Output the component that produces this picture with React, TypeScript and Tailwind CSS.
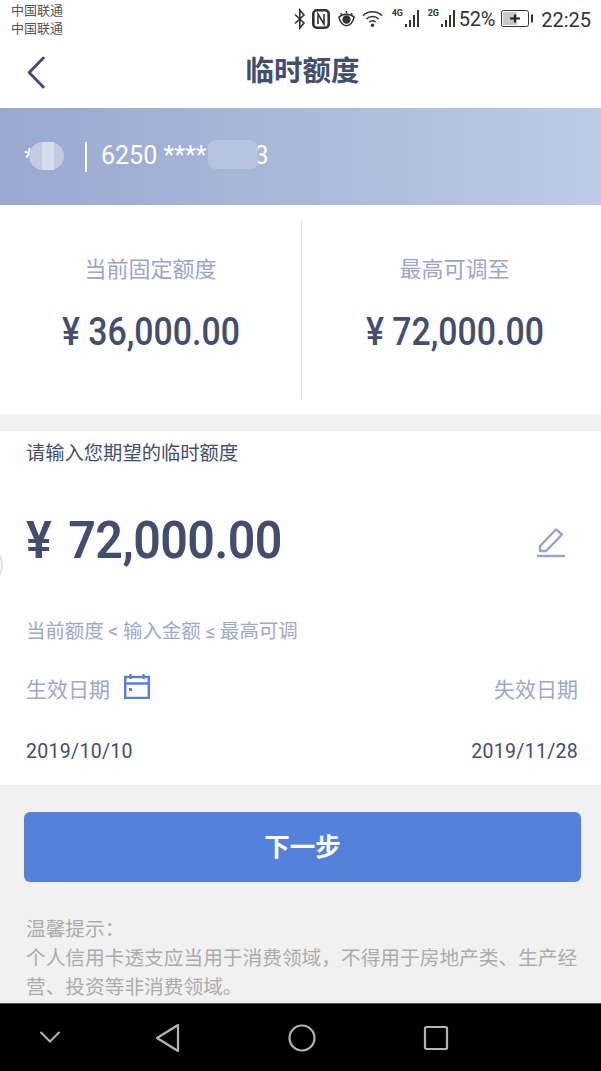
const cjk = "font-['Roboto','Noto_Sans_CJK_SC',sans-serif]";

function StatusBar() {
  return (
    <div className="h-[44px] flex justify-between pl-[11px] pr-[10px] bg-white">
      <div className="pt-[2px] text-[13px] leading-[18px] text-[#555]">
        <p>中国联通</p>
        <p>中国联通</p>
      </div>
      <div className="flex items-start pt-[7px] h-[30px] text-[#333]">
        <svg width="12" height="22" viewBox="0 0 12 22" className="mt-[1px]" fill="none" stroke="#333" strokeWidth="1.6">
          <path d="M1 6.5 L10 15 L5.8 20 V2 L10 7 L1 15.5" />
        </svg>
        <svg width="18" height="20" viewBox="0 0 18 20" className="ml-[6px] mt-[2px]" fill="none" stroke="#333" strokeWidth="2.6">
          <rect x="1.3" y="1.3" width="15.4" height="17.4" rx="3.5" />
          <path d="M6 15 V5 L12 15 V5" strokeWidth="1.6" />
        </svg>
        <svg width="19" height="20" viewBox="0 0 20 20" className="ml-[7px] mt-[2px]" fill="none" stroke="#333" strokeWidth="1.6">
          <path d="M2 8 C6 4 14 4 18 8 C17 14 13 17 10 17 C7 17 3 14 2 8 Z" />
          <circle cx="10" cy="10.5" r="3.6" fill="#333" />
          <path d="M4 4 L5.5 6 M10 1.5 V4 M16 4 L14.5 6" />
        </svg>
        <svg width="21" height="20" viewBox="0 0 22 20" className="ml-[6px] mt-[2px]" fill="none" stroke="#333" strokeWidth="1.5">
          <path d="M1 6.5 C6.5 1 15.5 1 21 6.5 M4.5 10 C8 6.5 14 6.5 17.5 10 M7.5 13.2 C9.5 11.5 12.5 11.5 14.5 13.2" />
          <circle cx="11" cy="16.5" r="1.8" fill="#333" stroke="none" />
        </svg>
        <Signal label="4G" className="ml-[9px]" />
        <Signal label="2G" className="ml-[9px]" />
        <span className="ml-[4px] text-[20px] leading-[24px] font-['Roboto',sans-serif] tracking-[-0.2px]">52%</span>
        <svg width="33" height="18" viewBox="0 0 33 18" className="ml-[6px] mt-[3px]" fill="none">
          <rect x="0.5" y="0.5" width="27" height="16" rx="2" stroke="#333" />
          <rect x="2" y="2" width="14" height="13" fill="#c8c8c8" />
          <path d="M9 8.5 H19 M14 4.5 V12.5" stroke="#222" strokeWidth="2.2" />
          <rect x="30" y="4.5" width="2" height="8" fill="#333" />
        </svg>
        <span className="ml-[7px] text-[20px] leading-[24px] mt-[1px] font-['Roboto',sans-serif]">22:25</span>
      </div>
    </div>
  );
}

function Signal({ label, className }: { label: string; className: string }) {
  return (
    <div className={`relative w-[27px] h-[20px] ${className}`}>
      <span className="absolute left-0 top-[1px] text-[9px] leading-[10px] font-bold font-['Roboto',sans-serif]">{label}</span>
      <div className="absolute right-0 bottom-0 flex items-end gap-[2px]">
        <i className="block w-[2px] h-[3px] bg-[#333]" />
        <i className="block w-[2px] h-[7px] bg-[#333]" />
        <i className="block w-[2px] h-[12px] bg-[#333]" />
        <i className="block w-[2px] h-[17px] bg-[#333]" />
      </div>
    </div>
  );
}

function Stat({ label, value, className }: { label: string; value: string; className: string }) {
  return (
    <div className={`flex flex-col items-center pt-[50px] ${className}`}>
      <p className="text-[22px] leading-[30px] text-[#9aa5c9]">{label}</p>
      <p className="mt-[25px] text-[38px] leading-[44px] font-medium text-[#434e6e] scale-x-[0.89]">{value}</p>
    </div>
  );
}

export default function App() {
  return (
    <div className={`w-[601px] h-[1071px] overflow-hidden flex flex-col bg-[#f1f1f1] ${cjk}`}>
      <StatusBar />

      <div className="h-[64px] relative flex items-center justify-center bg-white">
        <svg width="20" height="33" viewBox="0 0 20 34" className="absolute left-[26px] top-[12px]" fill="none" stroke="#434e6e" strokeWidth="3" strokeLinecap="round" strokeLinejoin="round">
          <path d="M17.5 2 L3 17 L17.5 32" />
        </svg>
        <h1 className="ml-[4px] text-[28.5px] leading-[40px] font-bold text-[#434e6e] -mt-[8px]">临时额度</h1>
      </div>

      <div className="h-[97px] flex items-center pl-[24px] text-white bg-gradient-to-r from-[#98a8d0] to-[#bdcbe5]">
        <div className="relative w-[61px] h-[30px] text-[24px] leading-[30px]">
          *
          <div className="absolute left-[5px] top-0 w-[35px] h-[28px] rounded-[14px] bg-[#c3cce3]" />
          <div className="absolute left-[18px] top-0 w-[12px] h-[28px] bg-[#d7dcec]" />
        </div>
        <div className="w-[2px] h-[30px] bg-white" />
        <div className="relative ml-[14px] text-[25px] leading-[30px] -mt-[2px]">
          6250 ****
          <span className="ml-[48px]">3</span>
          <div className="absolute left-[107px] top-[-1px] w-[50px] h-[29px] rounded-[8px] bg-[#b7c4e0]" />
        </div>
      </div>

      <div className="h-[209px] flex bg-white">
        <Stat label="当前固定额度" value="¥ 36,000.00" className="w-[301px]" />
        <div className="w-[1px] h-[178px] mt-[16px] bg-[#dfe2e8]" />
        <Stat label="最高可调至" value="¥ 72,000.00" className="flex-1 pl-[6px]" />
      </div>

      <div className="relative mt-[17px] h-[354px] bg-white pl-[26px] pr-[23px]">
        <div className="absolute left-[-10px] top-[122px] w-[13px] h-[24px] rounded-[50%] border-2 border-[#e0e0e0]" />
        <p className="pt-[9px] text-[19.3px] leading-[28px] text-[#434e6e]">请输入您期望的临时额度</p>
        <div className="mt-[38px] flex items-center justify-between h-[70px]">
          <p className="text-[52px] leading-[70px] font-semibold text-[#434e6e] tracking-[-0.6px] origin-left scale-x-[0.93]">
            <span className="mr-[6px]">¥</span> 72,000.00
          </p>
          <svg width="30" height="32" viewBox="0 0 30 32" className="mr-[12px] mt-[2px]" fill="none" stroke="#98a3cb" strokeWidth="2.4" strokeLinejoin="round">
            <path d="M4 20 L20 3.5 L26 8.5 L10 25 H4 Z" />
            <path d="M1 30 H29" />
          </svg>
        </div>
        <p className="mt-[42px] text-[19.4px] leading-[28px] text-[#9da8cc]">当前额度 &lt; 输入金额 ≤ 最高可调</p>
        <div className="mt-[22px] h-[44px] flex items-center justify-between">
          <div className="flex items-center">
            <span className="text-[21px] leading-[30px] text-[#9da8cc]">生效日期</span>
            <svg width="26" height="26" viewBox="0 0 26 26" className="ml-[14px] -mt-[8px]" fill="none" stroke="#5581db" strokeWidth="2.4">
              <rect x="1.2" y="4" width="23.6" height="21" />
              <path d="M1 10.5 H25 M6.5 1 V6 M19.5 1 V6" />
              <rect x="5" y="15" width="3" height="3" fill="#5581db" stroke="none" />
            </svg>
          </div>
          <span className="text-[21px] leading-[30px] text-[#9da8cc]">失效日期</span>
        </div>
        <div className="mt-[26px] flex justify-between text-[19.5px] leading-[28px] text-[#434e6e] tracking-[0.3px]">
          <span>2019/10/10</span>
          <span>2019/11/28</span>
        </div>
      </div>

      <div className="flex-1 px-[24px] pt-[27px] overflow-hidden">
        <button className="w-[557px] h-[70px] rounded-[6px] bg-[#5581db] text-white text-[25.5px] font-bold">下一步</button>
        <div className="mt-[33px] -mr-[6px] pl-[2px] text-[19.7px] leading-[29px] text-[#acacac]">
          <p>温馨提示：</p>
          <p>个人信用卡透支应当用于消费领域，不得用于房地产类、生产经营、投资等非消费领域。</p>
        </div>
      </div>

      <div className="h-[68px] bg-black flex items-center relative border-t border-[#555]">
        <svg width="22" height="14" viewBox="0 0 22 14" className="ml-[39px] -mt-[2px]" fill="none" stroke="#b4b4b4" strokeWidth="2">
          <path d="M1.5 2 L11 11.5 L20.5 2" />
        </svg>
        <svg width="26" height="30" viewBox="0 0 26 30" className="ml-[94px]" fill="none" stroke="#b4b4b4" strokeWidth="2.2" strokeLinejoin="round">
          <path d="M23 2 V28 L2 15 Z" />
        </svg>
        <svg width="28" height="28" viewBox="0 0 28 28" className="ml-[107px]" fill="none" stroke="#b4b4b4" strokeWidth="2.2">
          <circle cx="14" cy="14" r="12.5" />
        </svg>
        <svg width="26" height="26" viewBox="0 0 26 26" className="ml-[107px]" fill="none" stroke="#b4b4b4" strokeWidth="2.2">
          <rect x="2" y="2" width="22" height="22" rx="1.5" />
        </svg>
      </div>
    </div>
  );
}
